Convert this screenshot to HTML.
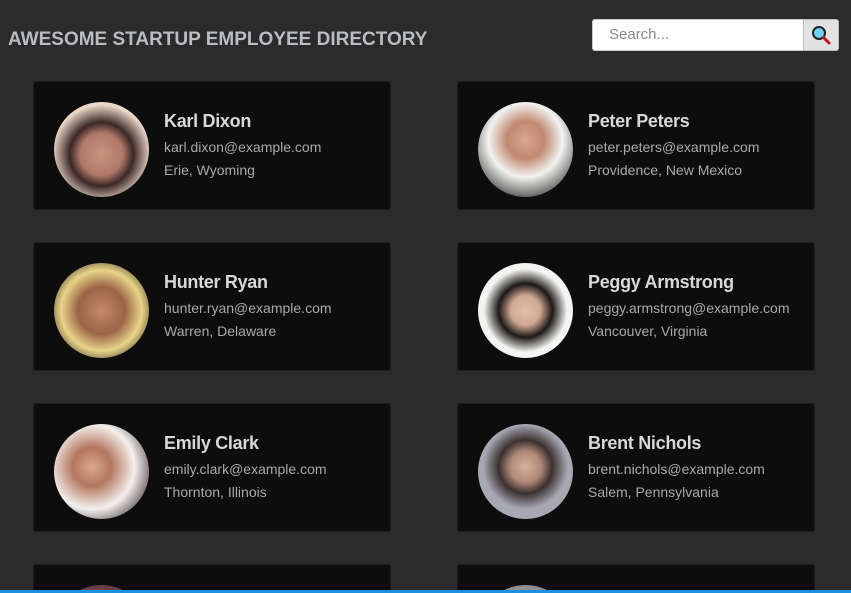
<!DOCTYPE html>
<html><head><style>
html,body{margin:0;padding:0;width:851px;height:593px;overflow:hidden;}
body{background:#2b2b2b;font-family:"Liberation Sans",sans-serif;position:relative;}
h1{position:absolute;left:8px;top:29px;margin:0;font-size:19px;font-weight:bold;color:#b9bcc2;letter-spacing:0px;}
.search{position:absolute;left:592px;top:19px;width:247px;height:32px;}
.search .in{position:absolute;left:0;top:0;width:212px;height:32px;background:#fff;border:1px solid #ccc;border-radius:3px 0 0 3px;font-size:15px;color:#888;line-height:30px;padding-left:16px;box-sizing:border-box;}
.search .bt{position:absolute;left:211px;top:0;width:36px;height:32px;background:#e2e2e2;border:1px solid #bbb;border-radius:0 3px 3px 0;box-sizing:border-box;}
.card{position:absolute;width:358px;height:129px;background:#0d0d0d;border:1px solid #1e1e1e;border-radius:3px;box-sizing:border-box;overflow:hidden;}
.av{position:absolute;left:20px;top:20px;width:95px;height:95px;border-radius:50%;}
.nm{position:absolute;left:130px;top:29px;font-size:18px;font-weight:bold;color:#d8d8d8;letter-spacing:-0.3px;}
.em{position:absolute;left:130px;top:57px;font-size:14px;color:#a9a9a9;}
.lc{position:absolute;left:130px;top:80px;font-size:14px;color:#a9a9a9;}
.bar{position:absolute;left:0;top:590px;width:851px;height:3px;background:#1b8fe2;}
</style></head><body>
<h1>AWESOME STARTUP EMPLOYEE DIRECTORY</h1>
<div class="search"><div class="in">Search...</div><div class="bt">
<svg width="34" height="30" viewBox="0 0 34 30"><circle cx="15" cy="13" r="6" fill="#6fd3f5" stroke="#222" stroke-width="2"/><line x1="19.5" y1="17.5" x2="25" y2="23" stroke="#c0141e" stroke-width="3" stroke-linecap="round"/></svg></div></div>

<div class="card" style="left:33px;top:81px"><div class="av" style="background:radial-gradient(circle at 50% 55%,#c89580 0,#b07868 30%,#3a2826 45%,#ecd8c8 70%)"></div><div class="nm">Karl Dixon</div><div class="em">karl.dixon@example.com</div><div class="lc">Erie, Wyoming</div></div>
<div class="card" style="left:457px;top:81px"><div class="av" style="background:radial-gradient(circle at 50% 40%,#d9a890 0,#c08870 25%,#f2f2f0 50%,#222 90%)"></div><div class="nm">Peter Peters</div><div class="em">peter.peters@example.com</div><div class="lc">Providence, New Mexico</div></div>
<div class="card" style="left:33px;top:242px"><div class="av" style="background:radial-gradient(circle at 50% 50%,#c48a68 0,#9a6446 35%,#e8d488 60%,#2a1e16 90%)"></div><div class="nm">Hunter Ryan</div><div class="em">hunter.ryan@example.com</div><div class="lc">Warren, Delaware</div></div>
<div class="card" style="left:457px;top:242px"><div class="av" style="background:radial-gradient(circle at 50% 50%,#e0c0ac 0,#d0a890 22%,#1c1818 40%,#f4f4f2 62%)"></div><div class="nm">Peggy Armstrong</div><div class="em">peggy.armstrong@example.com</div><div class="lc">Vancouver, Virginia</div></div>
<div class="card" style="left:33px;top:403px"><div class="av" style="background:radial-gradient(circle at 40% 45%,#d8a88c 0,#b47860 25%,#f4f0ee 55%,#2a2222 90%)"></div><div class="nm">Emily Clark</div><div class="em">emily.clark@example.com</div><div class="lc">Thornton, Illinois</div></div>
<div class="card" style="left:457px;top:403px"><div class="av" style="background:radial-gradient(circle at 50% 45%,#d8b0a0 0,#b08878 22%,#3a3030 38%,#a8a8b4 60%)"></div><div class="nm">Brent Nichols</div><div class="em">brent.nichols@example.com</div><div class="lc">Salem, Pennsylvania</div></div>
<div class="card" style="left:33px;top:564px;height:26px;border-bottom:none;border-radius:3px 3px 0 0"><div class="av" style="background:radial-gradient(circle,#8a4a3a,#5a3a4a)"></div></div>
<div class="card" style="left:457px;top:564px;height:26px;border-bottom:none;border-radius:3px 3px 0 0"><div class="av" style="background:radial-gradient(circle,#d0d0d0,#707070)"></div></div>
<div class="bar"></div>
</body></html>
